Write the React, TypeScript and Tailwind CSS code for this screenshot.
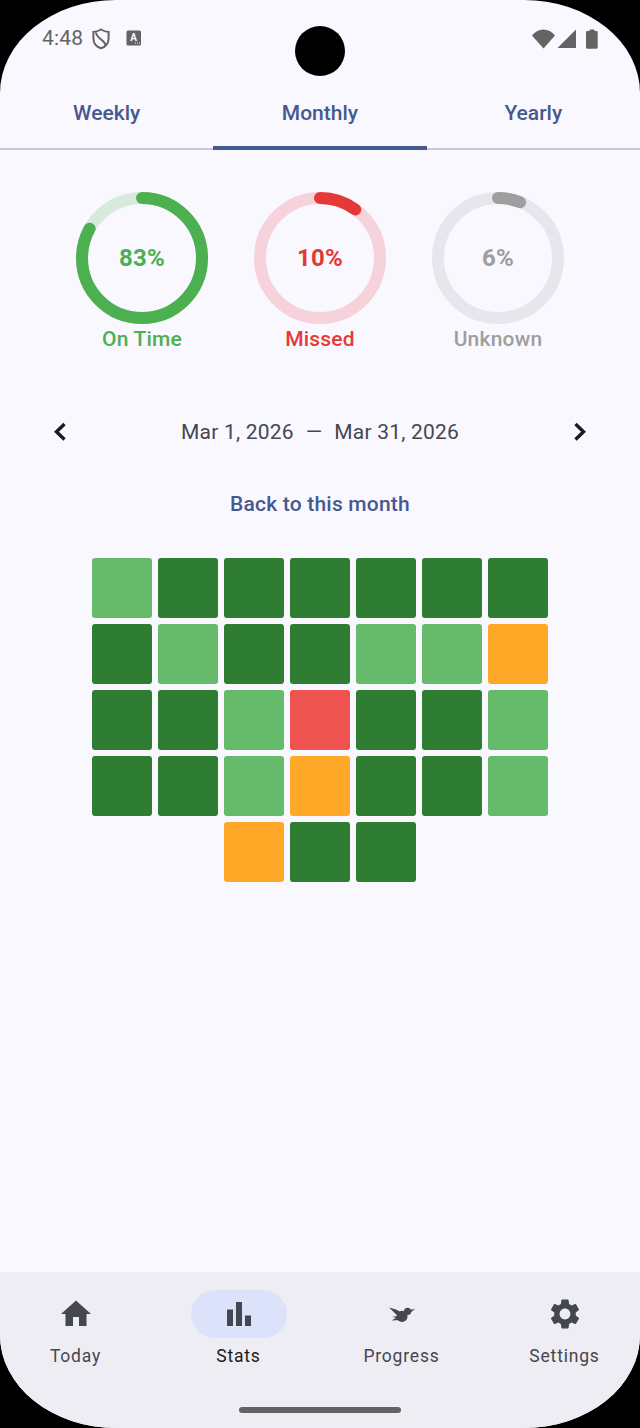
import React from "react";

const G = "bg-[#2e7d32]", L = "bg-[#66bb6a]", O = "bg-[#ffa726]", R = "bg-[#ef5350]", E = "bg-transparent";
const cells = [
  L, G, G, G, G, G, G,
  G, L, G, G, L, L, O,
  G, G, L, R, G, G, L,
  G, G, L, O, G, G, L,
  E, E, O, G, G, E, E,
];

function Ring({ pct, value, label, track, fill, text }: { pct: number; value: string; label: string; track: string; fill: string; text: string }) {
  const c = 2 * Math.PI * 60;
  return (
    <div className="flex w-[132px] flex-col items-center">
      <div className="grid h-[132px] w-[132px] place-items-center">
        <svg width="132" height="132" viewBox="0 0 132 132" className="[grid-area:1/1]">
          <circle cx="66" cy="66" r="60" fill="none" stroke={track} strokeWidth="12" />
          <circle cx="66" cy="66" r="60" fill="none" stroke={fill} strokeWidth="12" strokeLinecap="round" strokeDasharray={`${(pct / 100) * c} ${c}`} transform="rotate(-90 66 66)" />
        </svg>
        <span className={`[grid-area:1/1] text-[24px] font-bold leading-none tracking-[0.2px] ${text}`}>{value}</span>
      </div>
      <span className={`whitespace-nowrap text-[21px] font-medium leading-[30px] tracking-[0.2px] ${text}`}>{label}</span>
    </div>
  );
}

function NavItem({ label, active, children }: { label: string; active?: boolean; children: React.ReactNode }) {
  return (
    <div className="flex w-[96px] flex-col items-center">
      <div className={`flex h-[48px] w-[96px] items-center justify-center rounded-full ${active ? "bg-[#dce2f9]" : ""}`}>
        <svg width="36" height="36" viewBox="0 0 24 24" fill="#44474f">{children}</svg>
      </div>
      <span className={`mt-[4px] whitespace-nowrap text-[17.5px] font-[450] leading-[28px] tracking-[0.8px] ${active ? "text-[#1a1b20]" : "text-[#44474f]"}`}>{label}</span>
    </div>
  );
}

export default function App() {
  return (
    <div className="h-[1428px] w-[640px] overflow-hidden bg-black font-['Roboto',sans-serif]">
      <div className="relative flex h-full w-full flex-col overflow-hidden rounded-[116px/93px] bg-[#f9f8ff]">
        <div className="absolute left-[295px] top-[26px] h-[50px] w-[50px] rounded-full bg-black" />

        {/* Status bar */}
        <div className="flex h-[84px] items-start justify-between px-[42px] pt-[24px]">
          <div className="flex items-center">
            <span className="text-[21px] font-normal leading-[28px] tracking-[0.2px] text-[#636363]">4:48</span>
            <svg width="20" height="22" viewBox="0 0 20 22" className="ml-[8px] mt-[1px]" fill="none" stroke="#636363" strokeWidth="2">
              <path d="M10 1.500 C12.500 3 15 3.800 17.600 4 V10.500 C17.600 15 14.500 18.800 10 20.300 C5.500 18.800 2.400 15 2.400 10.500 V4 C5 3.800 7.500 3 10 1.500 Z" />
              <path d="M5 4.500 C5.500 9 10 11 12 13 C13.500 14.500 14.500 16 14.800 18" />
            </svg>
            <svg width="16" height="16" viewBox="0 0 16 16" className="ml-[15px]">
              <rect x="0.5" y="0.5" width="14.5" height="15" rx="1.5" fill="#636363" />
              <text x="7.7" y="11" fontSize="10" fontWeight="700" textAnchor="middle" fill="#f9f8ff" fontFamily="Roboto">A</text>
              <path d="M9 13h1M11 13h1M13 13h1" stroke="#f9f8ff" strokeWidth="1" />
            </svg>
          </div>
          <div className="mt-[5px] flex items-center">
            <svg width="23" height="20" viewBox="0 0 23 20"><path d="M0 6.500 C6 -1.500 17 -1.500 23 6.500 L11.500 19.500 Z" fill="#636363" /></svg>
            <svg width="19" height="20" viewBox="0 0 19 20" className="ml-[2px]"><path d="M19 0.500 V19 H0.500 Z" fill="#636363" /></svg>
            <svg width="12" height="20" viewBox="0 0 12 20" className="ml-[10px]"><path d="M3.500 2V1.200C3.500.8 3.800.5 4.200.5h3.600c.4 0 .7.3.7.7V2h2c.6 0 1.200.5 1.200 1.200v15.400c0 .7-.6 1.200-1.200 1.200H1.200C.6 19.800 0 19.300 0 18.600V3.200C0 2.500.6 2 1.200 2z" fill="#636363" /></svg>
          </div>
        </div>

        {/* Tabs */}
        <div className="flex h-[66px] border-b-2 border-[#cac8cf]">
          <div className="flex flex-1 items-center justify-center pb-[4px] text-[21px] font-medium text-[#46598f]">Weekly</div>
          <div className="-mb-[2px] flex flex-1 items-center justify-center border-b-4 border-[#46598f] pb-[2px] text-[21px] font-medium text-[#46598f]">Monthly</div>
          <div className="flex flex-1 items-center justify-center pb-[4px] text-[21px] font-medium text-[#46598f]">Yearly</div>
        </div>

        {/* Rings */}
        <div className="mt-[42px] flex justify-center gap-[46px]">
          <Ring pct={83} value="83%" label="On Time" track="#d8e9de" fill="#4caf50" text="text-[#4caf50]" />
          <Ring pct={10} value="10%" label="Missed" track="#f6d3da" fill="#e53935" text="text-[#e53935]" />
          <Ring pct={6} value="6%" label="Unknown" track="#e8e6ec" fill="#9e9e9e" text="text-[#9e9e9e]" />
        </div>

        {/* Date range */}
        <div className="mt-[59px] flex h-[36px] items-center justify-between px-[42px]">
          <svg width="36" height="36" viewBox="0 0 36 36" fill="none" stroke="#1a1b20" strokeWidth="3.4"><path d="M22.500 11 L14.500 18.800 L22.500 26.500" /></svg>
          <div className="flex translate-y-[1px] items-center text-[21px] leading-[28px] tracking-[0.2px] text-[#44474f]">
            <span>Mar 1, 2026</span>
            <span className="mx-[12px]">—</span>
            <span>Mar 31, 2026</span>
          </div>
          <svg width="36" height="36" viewBox="0 0 36 36" fill="none" stroke="#1a1b20" strokeWidth="3.4"><path d="M13.500 11 L21.500 18.800 L13.500 26.500" /></svg>
        </div>

        {/* Back link */}
        <div className="mt-[41px] text-center text-[21px] font-medium leading-[28px] tracking-[0.2px] text-[#46598f]">Back to this month</div>

        {/* Calendar heat map */}
        <div className="mt-[40px] grid grid-cols-[repeat(7,60px)] justify-center gap-[6px]">
          {cells.map((c, i) => (
            <div key={i} className={`h-[60px] w-[60px] rounded-[3px] ${c}`} />
          ))}
        </div>

        <div className="flex-1" />

        {/* Bottom navigation */}
        <div className="relative flex h-[156px] justify-between bg-[#eeedf4] px-[27.5px] pt-[18px]">
          <NavItem label="Today"><path d="M10 20v-6h4v6h5v-8h3L12 3 2 12h3v8z" /></NavItem>
          <NavItem label="Stats" active><path d="M4 9h4v11H4zm12 4h4v7h-4zm-6-9h4v16h-4z" /></NavItem>
          <NavItem label="Progress">
            <circle cx="12" cy="13.600" r="3.700" />
            <circle cx="15.700" cy="10.300" r="2.400" />
            <path d="M3.300 7.700 L8.500 9.200 L11.500 11 L14.500 12 L11 15 Z" />
            <path d="M5 16.300 L9 14 L11 16 Z" />
            <path d="M5.500 13.800 L9 13.500 L9 15 Z" />
            <path d="M17.500 9.300 L20.800 8.500 L17.800 11 Z" />
          </NavItem>
          <NavItem label="Settings">
            <path d="M19.140 12.940c.04-.3.06-.61.06-.94 0-.32-.02-.64-.07-.94l2.030-1.580c.18-.14.23-.41.12-.61l-1.920-3.320c-.12-.22-.37-.29-.59-.22l-2.390.96c-.5-.38-1.030-.7-1.620-.94l-.36-2.540c-.04-.24-.24-.41-.48-.41h-3.840c-.24 0-.43.17-.47.41l-.36 2.540c-.59.24-1.130.57-1.620.94l-2.390-.96c-.22-.08-.47 0-.59.22L2.740 8.870c-.12.21-.08.47.12.61l2.030 1.580c-.05.3-.09.63-.09.94s.02.64.07.94l-2.030 1.580c-.18.14-.23.41-.12.61l1.920 3.320c.12.22.37.29.59.22l2.390-.96c.5.38 1.030.7 1.620.94l.36 2.540c.05.24.24.41.48.41h3.840c.24 0 .44-.17.47-.41l.36-2.540c.59-.24 1.130-.56 1.620-.94l2.390.96c.22.08.47 0 .59-.22l1.920-3.320c.12-.22.07-.47-.12-.61l-2.010-1.580zM12 15.600c-1.980 0-3.600-1.620-3.600-3.600s1.620-3.600 3.600-3.600 3.600 1.620 3.600 3.600-1.620 3.600-3.600 3.600z" />
          </NavItem>
          <div className="absolute bottom-[15px] left-[239px] h-[6px] w-[162px] rounded-full bg-[#636366]" />
        </div>
      </div>
    </div>
  );
}
